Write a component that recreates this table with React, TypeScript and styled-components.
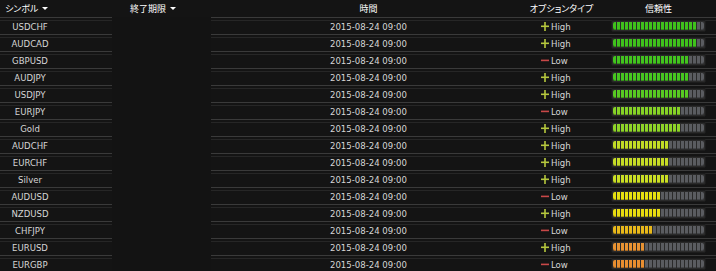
import styled, { createGlobalStyle } from 'styled-components';

const GlobalStyle = createGlobalStyle`
  html, body {
    margin: 0;
    padding: 0;
    background: #141414;
  }
  body {
    font-family: "DejaVu Sans Condensed", "DejaVu Sans", sans-serif;
    font-stretch: condensed;
  }
`;

const COLS = '112px 99px 314px 73px 118px';

type Quote = {
  symbol: string;
  high: boolean;
  level: number;
  color: string;
};

const quotes: Quote[] = [
  { symbol: 'USDCHF', high: true, level: 21, color: '#3fc21c' },
  { symbol: 'AUDCAD', high: true, level: 21, color: '#3fc21c' },
  { symbol: 'GBPUSD', high: false, level: 19, color: '#42c41e' },
  { symbol: 'AUDJPY', high: true, level: 19, color: '#46c620' },
  { symbol: 'USDJPY', high: true, level: 19, color: '#58ca22' },
  { symbol: 'EURJPY', high: false, level: 17, color: '#86d226' },
  { symbol: 'Gold', high: true, level: 17, color: '#8ed428' },
  { symbol: 'AUDCHF', high: true, level: 14, color: '#c2dc26' },
  { symbol: 'EURCHF', high: true, level: 14, color: '#c6dc26' },
  { symbol: 'Silver', high: true, level: 14, color: '#cade24' },
  { symbol: 'AUDUSD', high: false, level: 12, color: '#e6e010' },
  { symbol: 'NZDUSD', high: true, level: 12, color: '#e8dc10' },
  { symbol: 'CHFJPY', high: false, level: 10, color: '#e8b81a' },
  { symbol: 'EURUSD', high: true, level: 8, color: '#e89232' },
  { symbol: 'EURGBP', high: false, level: 8, color: '#e88e30' },
];

const SEGMENTS = 23;

const Table = styled.div`
  width: 716px;
  height: 271px;
  overflow: hidden;
  background: #141414;
`;

const HeaderRow = styled.div`
  display: grid;
  grid-template-columns: ${COLS};
  height: 17px;
  align-items: center;
  color: #fff;
  font-family: "Noto Sans CJK JP", sans-serif;
  font-size: 9px;
  font-feature-settings: "palt";
  line-height: 17px;
`;

const HeadCell = styled.div<{ $align?: 'left' | 'center'; $padLeft?: number; $padRight?: number }>`
  display: flex;
  align-items: center;
  justify-content: ${(p) => (p.$align === 'center' ? 'center' : 'flex-start')};
  padding-left: ${(p) => p.$padLeft ?? 0}px;
  padding-right: ${(p) => p.$padRight ?? 0}px;
`;

const Caret = styled.span`
  display: inline-block;
  width: 0;
  height: 0;
  margin-left: 4px;
  border-left: 3px solid transparent;
  border-right: 3px solid transparent;
  border-top: 3px solid #fff;
`;

const Row = styled.div`
  display: grid;
  grid-template-columns: ${COLS};
  height: 17px;
  color: #d6d6d6;
  font-size: 9.5px;
`;

const Cell = styled.div<{ $align?: 'left' | 'center'; $padLeft?: number; $padRight?: number }>`
  height: 17px;
  box-sizing: border-box;
  border-top: 1px solid #3a3a3a;
  background: linear-gradient(
    to bottom,
    transparent 2px,
    #262626 2px,
    #262626 3px,
    transparent 3px
  );
  display: flex;
  align-items: center;
  justify-content: ${(p) => (p.$align === 'center' ? 'center' : 'flex-start')};
  padding-left: ${(p) => p.$padLeft ?? 0}px;
  padding-right: ${(p) => p.$padRight ?? 0}px;
  white-space: nowrap;
`;

const BlankCell = styled.div`
  height: 17px;
  background: #131313;
`;

const OptionLabel = styled.span`
  margin-left: 2px;
`;

const Bar = styled.div`
  display: flex;
  gap: 1px;
  padding: 1px;
  border: 1px solid #1c1c1c;
  border-radius: 2px;
  background: #2a2a2a;
`;

const Segment = styled.span<{ $color: string }>`
  width: 3px;
  height: 8px;
  background: ${(p) => p.$color};
  box-shadow: inset 0 -1px 0 rgba(0, 0, 0, 0.25);

  &:first-child {
    border-radius: 2px 0 0 2px;
  }
  &:last-child {
    border-radius: 0 2px 2px 0;
  }
`;

const PlusIcon = () => (
  <svg width="8" height="9" viewBox="0 0 8 9">
    <rect x="0" y="3.5" width="8" height="1.6" fill="#b6c83e" />
    <rect x="3.2" y="0" width="1.6" height="9" fill="#b6c83e" />
  </svg>
);

const MinusIcon = () => (
  <svg width="8" height="9" viewBox="0 0 8 9">
    <rect x="0" y="3.6" width="8" height="1.6" fill="#c84848" />
  </svg>
);

const ReliabilityBar = ({ level, color }: { level: number; color: string }) => (
  <Bar>
    {Array.from({ length: SEGMENTS }, (_, i) => (
      <Segment key={i} $color={i < level ? color : '#5a5c60'} />
    ))}
  </Bar>
);

const App = () => {
  return (
    <>
      <GlobalStyle />
      <Table>
        <HeaderRow>
          <HeadCell $padLeft={5}>
            シンボル
            <Caret />
          </HeadCell>
          <HeadCell $padLeft={18}>
            終了期限
            <Caret />
          </HeadCell>
          <HeadCell $align="center" $padLeft={1}>
            時間
          </HeadCell>
          <HeadCell $align="center">オプションタイプ</HeadCell>
          <HeadCell $align="center" $padLeft={13} $padRight={10}>
            信頼性
          </HeadCell>
        </HeaderRow>
        {quotes.map((q) => (
          <Row key={q.symbol}>
            <Cell $align="center" $padRight={52}>
              {q.symbol}
            </Cell>
            <BlankCell />
            <Cell $align="center" $padLeft={1}>
              2015-08-24 09:00
            </Cell>
            <Cell $padLeft={16}>
              {q.high ? <PlusIcon /> : <MinusIcon />}
              <OptionLabel>{q.high ? 'High' : 'Low'}</OptionLabel>
            </Cell>
            <Cell $padLeft={13}>
              <ReliabilityBar level={q.level} color={q.color} />
            </Cell>
          </Row>
        ))}
      </Table>
    </>
  );
};

export default App;
